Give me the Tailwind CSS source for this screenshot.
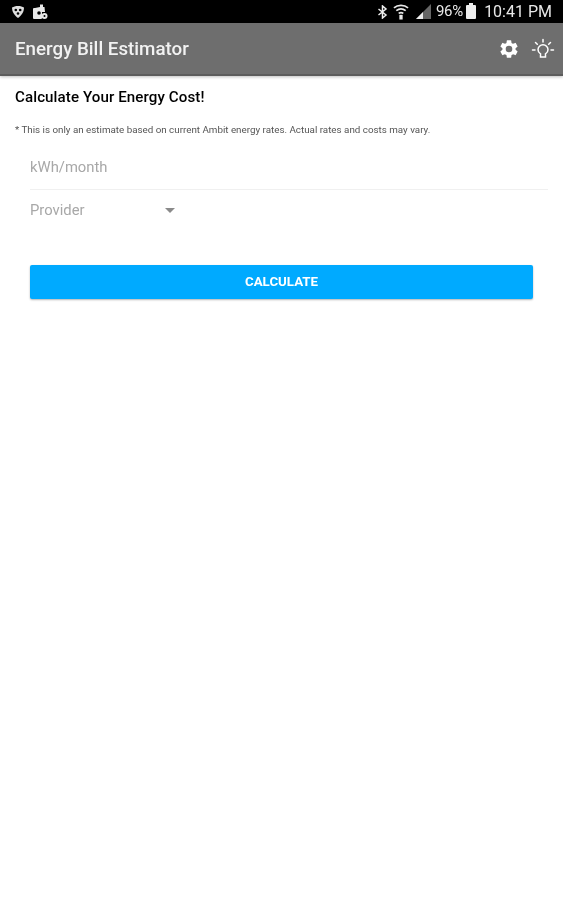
<!doctype html>
<html>
  <head>
    <meta charset="utf-8" />
    <script src="https://cdn.jsdelivr.net/npm/@tailwindcss/browser@4"></script>
  </head>
  <body class="min-h-screen bg-white font-['Roboto',sans-serif] text-black">
    <div class="blur-[0.45px]">
      <!-- status bar -->
      <div class="h-[23px] bg-black flex items-center justify-between pl-[11px] pr-[11px] text-[#e8e8e8]">
        <div class="flex items-center gap-[7px]">
          <svg class="w-[14px] h-[14px]" viewBox="0 0 14 14" fill="#ddd"><path d="M7 1C4.500 1 2.500 1.600 1 2.600c0 4 2.200 8 6 10.400 3.800-2.400 6-6.400 6-10.400C11.500 1.600 9.500 1 7 1z"/><circle cx="4.800" cy="5" r="1.300" fill="#000"/><circle cx="9.200" cy="5" r="1.300" fill="#000"/><circle cx="7" cy="8.500" r="1.300" fill="#000"/></svg>
          <svg class="w-[16px] h-[17px]" viewBox="0 0 16 17" fill="#e8e8e8"><path d="M3 5l5-1V1.500h3V4h1.500l.5 5H3z"/><rect x="1" y="5" width="9" height="11" rx="1"/><circle cx="7" cy="10" r="1.800" fill="#000"/><circle cx="12.500" cy="13" r="3"/><circle cx="12.500" cy="13" r="1" fill="#000"/></svg>
        </div>
        <div class="flex items-center">
          <svg class="w-[11px] h-[14px] mr-[5px]" viewBox="0 0 11 14" fill="none" stroke="#eee" stroke-width="1.500"><path d="M1.500 4l7.500 6-3.500 3V1l3.500 3-7.500 6"/></svg>
          <svg class="w-[16px] h-[18px] mr-[7px]" viewBox="0 0 17 18" fill="none" stroke="#e8e8e8" stroke-width="1.800"><path d="M1 4.500c4-3.500 11-3.500 15 0M3.500 7.500c3-2.300 7-2.300 10 0M6 10.500c1.500-1 3.500-1 5 0"/><path d="M8.500 12v5" stroke-width="3.500"/></svg>
          <svg class="w-[16px] h-[15px] mr-[4px]" viewBox="0 0 16 15"><path d="M0 15L15 0v15z" fill="#666"/><path d="M0 15l7-7v7z" fill="#eee"/></svg>
          <span class="text-[15px] tracking-[-0.2px] mr-[3px]">96%</span>
          <div class="w-[10px] h-[14px] bg-[#eee] rounded-[1px] mr-[8px] relative"><div class="absolute -top-[2px] left-[3px] w-[4px] h-[2px] bg-[#eee]"></div></div>
          <span class="text-[16px]">10:41 PM</span>
        </div>
      </div>

      <!-- app bar -->
      <header class="h-[53px] bg-[#6e6e6e] border-b-[2px] border-[#5c5c5c] shadow-[0_1px_3px_rgba(0,0,0,0.25)] flex items-center justify-between pl-[15px] pr-[8px]">
        <h1 class="text-[18.750px] font-medium text-[#f2f2f2] pt-[1px]">Energy Bill Estimator</h1>
        <div class="flex items-center gap-[11px]">
          <svg class="w-[22px] h-[22px]" viewBox="0 0 24 24" fill="#fff"><path d="M19.140 12.940c.04-.3.060-.61.060-.94 0-.32-.020-.64-.070-.94l2.030-1.580a.49.490 0 0 0 .120-.610l-1.920-3.320a.49.490 0 0 0-.590-.220l-2.390.960c-.5-.38-1.030-.7-1.620-.94l-.36-2.540a.48.480 0 0 0-.480-.410h-3.840a.48.480 0 0 0-.470.410l-.36 2.540c-.590.240-1.130.570-1.620.94l-2.390-.960a.48.480 0 0 0-.590.220L2.740 8.870a.48.480 0 0 0 .120.610l2.030 1.580c-.050.3-.090.630-.090.940s.020.640.070.940l-2.030 1.580a.49.490 0 0 0-.120.610l1.920 3.320c.12.220.37.290.590.220l2.390-.960c.5.380 1.030.7 1.620.94l.36 2.540c.050.240.240.410.480.410h3.840c.24 0 .44-.170.470-.410l.36-2.540c.590-.240 1.130-.560 1.620-.94l2.390.960c.220.080.470 0 .590-.220l1.920-3.320a.48.480 0 0 0-.120-.610l-2.010-1.580zM12 15.600A3.600 3.600 0 1 1 12 8.400a3.600 3.600 0 0 1 0 7.200z"/></svg>
          <svg class="w-[24px] h-[24px]" viewBox="0 0 24 24" fill="none" stroke="#fff" stroke-width="1.500" stroke-linecap="round"><path d="M9.500 20v-3.200C7.800 15.800 7 14.300 7 12.800a5 5 0 0 1 10 0c0 1.500-.8 3-2.500 4V20z"/><path d="M12 2.500v2.500M4.500 5.500l1.800 1.800M19.500 5.500l-1.800 1.800M1.500 13H4M20 13h2.500"/></svg>
        </div>
      </header>

      <main class="pl-[15px] pt-[13px]">
        <h2 class="text-[15.100px] leading-[17px] font-medium tracking-[0.1px]">Calculate Your Energy Cost!</h2>
        <p class="mt-[18px] text-[9.800px] leading-[12px] text-[#555]">* This is only an estimate based on current Ambit energy rates. Actual rates and costs may vary.</p>

        <div class="ml-[15px] mt-[10px] mr-[15px] h-[44px] border-b border-[#f0f0f0] flex items-center text-[14.800px] text-[#a8a8a8]">
          kWh/month
        </div>
        <div class="ml-[15px] h-[40px] flex items-center text-[14.800px] text-[#a8a8a8]">
          <span class="w-[135px]">Provider</span>
          <div class="w-0 h-0 border-x-[5px] border-x-transparent border-t-[5px] border-t-[#8a8a8a]"></div>
        </div>

        <button class="block ml-[15px] mt-[35px] w-[503px] h-[34px] rounded-[2px] bg-[#00aaff] text-white text-[13.300px] font-bold shadow-[0_1px_2px_rgba(0,0,0,0.3)]">
          CALCULATE
        </button>
      </main>
    </div>
  </body>
</html>
